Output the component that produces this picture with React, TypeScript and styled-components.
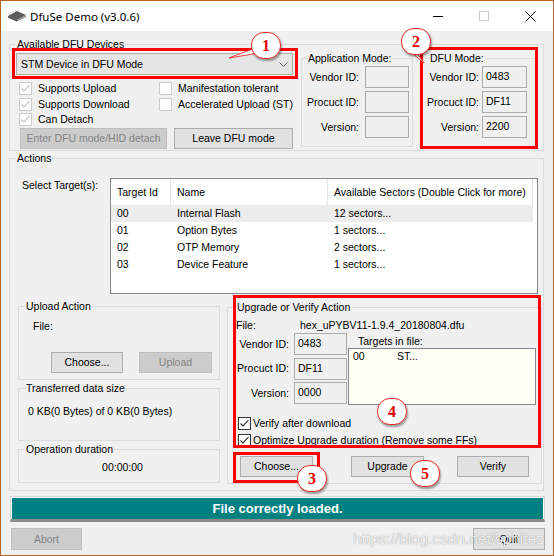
import React from "react";
import styled, { createGlobalStyle } from "styled-components";

const GlobalStyle = createGlobalStyle`
  html, body { margin: 0; padding: 0; background: #ffffff; }
  body {
    font-family: "Liberation Sans", Arial, sans-serif;
    font-size: 10.5px;
    line-height: 13px;
    color: #000;
  }
  * { box-sizing: border-box; }
`;

const Window = styled.div`
  position: relative;
  width: 554px;
  height: 556px;
  border: 1px solid #b8641e;
  background: #f0f0f0;
  display: flex;
  flex-direction: column;
  overflow: hidden;
`;

const TitleBar = styled.div`
  height: 30px;
  flex: none;
  background: #ffffff;
  display: flex;
  align-items: center;
`;

const TitleText = styled.span`
  margin-left: 3px;
  font-family: "Noto Sans", "Liberation Sans", sans-serif;
  font-size: 11.5px;
  color: #000;
`;

const TitleButtons = styled.div`
  margin-left: auto;
  display: flex;
  height: 100%;
`;

const TitleButton = styled.div`
  width: 46px;
  height: 30px;
  display: flex;
  align-items: center;
  justify-content: center;
`;

const Body = styled.div`
  flex: 1;
  display: flex;
  flex-direction: column;
  padding-left: 8px;
`;

const Group = styled.div<{ $w: number; $h: number; $mt?: number; $ml?: number }>`
  flex: none;
  width: ${(p) => p.$w}px;
  height: ${(p) => p.$h}px;
  margin-top: ${(p) => p.$mt ?? 0}px;
  margin-left: ${(p) => p.$ml ?? 0}px;
  border: 1px solid #dcdcdc;
  display: flex;
  flex-direction: column;
`;

const Caption = styled.div<{ $indent?: number }>`
  align-self: flex-start;
  margin: -7px 0 0 ${(p) => p.$indent ?? 6}px;
  padding: 0 1px;
  height: 13px;
  line-height: 13px;
  background: #f0f0f0;
  white-space: nowrap;
`;

/* ---------- devices section ---------- */

const DevicesBody = styled.div`
  display: flex;
  align-items: flex-start;
`;

const DeviceColumn = styled.div`
  width: 277px;
  margin: 2px 0 0 6px;
  display: flex;
  flex-direction: column;
`;

const Combo = styled.div`
  height: 22px;
  border: 1px solid #adadad;
  background: #e5e5e5;
  display: flex;
  align-items: center;
  padding: 0 4px 0 4px;
`;

const ComboText = styled.span`
  flex: 1;
`;

const CheckGrid = styled.div`
  display: grid;
  grid-template-columns: 140px 1fr;
  grid-auto-rows: 15.5px;
  margin: 6px 0 0 3px;
`;

const CheckRow = styled.div<{ $gap: number; $h?: number }>`
  display: flex;
  align-items: center;
  gap: ${(p) => p.$gap}px;
  white-space: nowrap;
  height: ${(p) => (p.$h ? `${p.$h}px` : "auto")};
`;

const Box = styled.span<{ $disabled?: boolean }>`
  flex: none;
  width: 13px;
  height: 13px;
  border: 1px solid ${(p) => (p.$disabled ? "#cccccc" : "#333333")};
  background: #ffffff;
  display: flex;
  align-items: center;
  justify-content: center;
`;

const ButtonRow = styled.div<{ $mt: number; $ml: number; $gap: number }>`
  display: flex;
  margin: ${(p) => p.$mt}px 0 0 ${(p) => p.$ml}px;
  gap: ${(p) => p.$gap}px;
`;

const Button = styled.button<{ $w: number; $h?: number; $off?: boolean; $ml?: number }>`
  flex: none;
  width: ${(p) => p.$w}px;
  height: ${(p) => p.$h ?? 21}px;
  margin-left: ${(p) => p.$ml ?? 0}px;
  padding: 0;
  font: inherit;
  border: 1px solid ${(p) => (p.$off ? "#bfbfbf" : "#adadad")};
  background: ${(p) => (p.$off ? "#cccccc" : "#e1e1e1")};
  color: ${(p) => (p.$off ? "#838383" : "#000000")};
  white-space: nowrap;
`;

const FieldGrid = styled.div<{ $label: number; $box: number; $gap: number; $rowGap: number; $mt: number; $ml?: number }>`
  display: grid;
  grid-template-columns: ${(p) => p.$label}px ${(p) => p.$box}px;
  grid-auto-rows: 22px;
  column-gap: ${(p) => p.$gap}px;
  row-gap: ${(p) => p.$rowGap}px;
  align-items: center;
  margin: ${(p) => p.$mt}px 0 0 ${(p) => p.$ml ?? 0}px;
  flex: none;
`;

const FieldLabel = styled.span`
  text-align: right;
  white-space: nowrap;
`;

const TextBox = styled.div`
  height: 22px;
  border: 1px solid #acacac;
  background: #f0f0f0;
  padding: 3px 0 0 3px;
  line-height: 13px;
`;

/* ---------- actions ---------- */

const TargetsRow = styled.div`
  display: flex;
  align-items: flex-start;
`;

const SideLabel = styled.span`
  width: 88px;
  margin: 13.5px 0 0 12px;
  white-space: nowrap;
  flex: none;
`;

const TargetList = styled.div`
  flex: none;
  width: 428px;
  height: 116px;
  margin-top: 13px;
  border: 1px solid #828790;
  background: #ffffff;
`;

const ListHeader = styled.div`
  display: grid;
  grid-template-columns: 60px 157px 205px;
  height: 26px;
`;

const HeaderCell = styled.div`
  border-right: 1px solid #e5e5e5;
  padding-left: 6px;
  display: flex;
  align-items: center;
  white-space: nowrap;
`;

const ListRow = styled.div<{ $selected?: boolean }>`
  display: grid;
  grid-template-columns: 60px 157px 205px;
  width: 422px;
  height: 17px;
  align-items: center;
  background: ${(p) => (p.$selected ? "#ececec" : "transparent")};
`;

const Cell = styled.span`
  padding-left: 6px;
  white-space: nowrap;
`;

const LowerRow = styled.div`
  display: flex;
  align-items: flex-start;
  margin-top: 12px;
`;

const SideColumn = styled.div`
  width: 202px;
  margin-left: 8px;
  display: flex;
  flex-direction: column;
  flex: none;
`;

const PlainText = styled.div<{ $mt: number; $ml?: number; $center?: boolean }>`
  margin: ${(p) => p.$mt}px 0 0 ${(p) => p.$ml ?? 0}px;
  white-space: nowrap;
  text-align: ${(p) => (p.$center ? "center" : "left")};
`;

const FileRow = styled.div`
  display: flex;
  margin: 4.5px 0 0 8px;
  white-space: nowrap;
`;

const FileKey = styled.span`
  width: 64px;
`;

const MiddleRow = styled.div`
  display: flex;
  align-items: flex-start;
  margin-top: 1.5px;
`;

const TargetsColumn = styled.div`
  display: flex;
  flex-direction: column;
  margin-left: 1px;
`;

const TargetsLabel = styled.span`
  margin: 1.5px 0 0 10px;
`;

const FileTargets = styled.div`
  width: 188px;
  height: 57px;
  margin-top: 0.5px;
  border: 1px solid #828790;
  background: #fffff8;
  padding: 1px 0 0 4px;
  display: flex;
`;

const TargetCell = styled.span<{ $w?: number }>`
  width: ${(p) => (p.$w ? `${p.$w}px` : "auto")};
`;

const CheckStack = styled.div`
  display: flex;
  flex-direction: column;
  margin: 9.5px 0 0 10px;
`;

/* ---------- status / bottom ---------- */

const StatusFrame = styled.div`
  flex: none;
  width: 535px;
  margin: 5px 0 0 1px;
  border: 1px solid #d6d6d6;
  border-bottom: 3px solid #8a8a8a;
  background: #ffffff;
  padding: 1px 1px 0 1px;
`;

const StatusText = styled.div`
  height: 21px;
  background: #008080;
  color: #ffffff;
  font-weight: bold;
  font-size: 13px;
  display: flex;
  align-items: center;
  justify-content: center;
`;

const BottomRow = styled.div`
  display: flex;
  margin: 6px 8px 0 2px;
`;

/* ---------- annotations ---------- */

const Highlight = styled.div<{ $x: number; $y: number; $w: number; $h: number }>`
  position: absolute;
  left: ${(p) => p.$x - 1}px;
  top: ${(p) => p.$y - 1}px;
  width: ${(p) => p.$w}px;
  height: ${(p) => p.$h}px;
  border: 3px solid #ff0000;
  pointer-events: none;
`;

const Badge = styled.div<{ $x: number; $y: number }>`
  position: absolute;
  left: ${(p) => p.$x - 1}px;
  top: ${(p) => p.$y - 1}px;
  width: 30px;
  height: 27px;
  border: 1.5px solid #f02828;
  border-radius: 13px;
  background: #ffffff;
  box-shadow: 1px 2px 2px rgba(0, 0, 0, 0.35);
  display: flex;
  align-items: center;
  justify-content: center;
  font-family: "Liberation Serif", serif;
  font-weight: bold;
  font-size: 16px;
  color: #e60000;
`;

const Pointers = styled.svg`
  position: absolute;
  left: 0;
  top: 0;
  pointer-events: none;
`;

const Watermark = styled.div`
  position: absolute;
  left: 352px;
  top: 529px;
  font-size: 15.4px;
  line-height: 18px;
  color: rgba(255, 255, 255, 0.85);
  text-shadow: 0 0 1px rgba(90, 90, 90, 0.7);
  white-space: nowrap;
  pointer-events: none;
`;

const CheckMark = ({ color }: { color: string }) => (
  <svg width="11" height="11" viewBox="0 0 11 11">
    <polyline points="1.5,5.5 4,8 9.5,2.2" fill="none" stroke={color} strokeWidth="1.2" />
  </svg>
);

function Check({
  label,
  checked,
  disabled,
  gap,
  h,
}: {
  label: string;
  checked?: boolean;
  disabled?: boolean;
  gap: number;
  h?: number;
}) {
  return (
    <CheckRow $gap={gap} $h={h}>
      <Box $disabled={disabled}>{checked && <CheckMark color={disabled ? "#c4c4c4" : "#333"} />}</Box>
      <span>{label}</span>
    </CheckRow>
  );
}

const ChipIcon = () => (
  <svg width="20" height="14" viewBox="0 0 20 14" style={{ marginLeft: 6, flex: "none" }}>
    <polygon points="1,7 10,2 19,6 10,11" fill="#5c5c5c" />
    <polygon points="1,7 10,11 10,12.5 1,8.5" fill="#3a3a3a" />
    <polygon points="10,11 19,6 19,7.5 10,12.5" fill="#8a8a8a" />
    {[0, 1, 2, 3].map((i) => (
      <line key={"a" + i} x1={3 + i * 2} y1={5.9 - i * 1.1} x2={2.2 + i * 2} y2={4.6 - i * 1.1} stroke="#9a9a9a" strokeWidth="0.9" />
    ))}
    {[0, 1, 2, 3].map((i) => (
      <line key={"b" + i} x1={11.5 + i * 2} y1={11 - i * 1.1} x2={12.3 + i * 2} y2={12.3 - i * 1.1} stroke="#9a9a9a" strokeWidth="0.9" />
    ))}
  </svg>
);

const targets = [
  { id: "00", name: "Internal Flash", sectors: "12 sectors..." },
  { id: "01", name: "Option Bytes", sectors: "1 sectors..." },
  { id: "02", name: "OTP Memory", sectors: "2 sectors..." },
  { id: "03", name: "Device Feature", sectors: "1 sectors..." },
];

export default function App() {
  return (
    <>
      <GlobalStyle />
      <Window>
        <TitleBar>
          <ChipIcon />
          <TitleText>DfuSe Demo (v3.0.6)</TitleText>
          <TitleButtons>
            <TitleButton>
              <svg width="10" height="10">
                <line x1="0" y1="5.5" x2="10" y2="5.5" stroke="#000" />
              </svg>
            </TitleButton>
            <TitleButton>
              <svg width="10" height="10">
                <rect x="0.5" y="0.5" width="9" height="9" fill="none" stroke="#cccccc" />
              </svg>
            </TitleButton>
            <TitleButton>
              <svg width="11" height="11">
                <path d="M0.5 0.5L10.5 10.5M10.5 0.5L0.5 10.5" stroke="#000" />
              </svg>
            </TitleButton>
          </TitleButtons>
        </TitleBar>

        <Body>
          <Group $w={535} $h={107} $mt={13}>
            <Caption>Available DFU Devices</Caption>
            <DevicesBody>
              <DeviceColumn>
                <Combo>
                  <ComboText>STM Device in DFU Mode</ComboText>
                  <svg width="9" height="5" viewBox="0 0 9 5">
                    <polyline points="0.5,0.5 4.5,4.5 8.5,0.5" fill="none" stroke="#606060" />
                  </svg>
                </Combo>
                <CheckGrid>
                  <Check label="Supports Upload" checked disabled gap={6} />
                  <Check label="Manifestation tolerant" disabled gap={6} />
                  <Check label="Supports Download" checked disabled gap={6} />
                  <Check label="Accelerated Upload (ST)" disabled gap={6} />
                  <Check label="Can Detach" checked disabled gap={6} />
                </CheckGrid>
                <ButtonRow $mt={0.5} $ml={4} $gap={7}>
                  <Button $w={147} $off>
                    Enter DFU mode/HID detach
                  </Button>
                  <Button $w={119}>Leave DFU mode</Button>
                </ButtonRow>
              </DeviceColumn>

              <Group $w={112} $h={89} $mt={7} $ml={8}>
                <Caption $indent={5}>Application Mode:</Caption>
                <FieldGrid $label={57} $box={44} $gap={6} $rowGap={3} $mt={1}>
                  <FieldLabel>Vendor ID:</FieldLabel>
                  <TextBox />
                  <FieldLabel>Procuct ID:</FieldLabel>
                  <TextBox />
                  <FieldLabel>Version:</FieldLabel>
                  <TextBox />
                </FieldGrid>
              </Group>

              <Group $w={116} $h={89} $mt={7} $ml={8}>
                <Caption $indent={7}>DFU Mode:</Caption>
                <FieldGrid $label={57} $box={45} $gap={3} $rowGap={3} $mt={1}>
                  <FieldLabel>Vendor ID:</FieldLabel>
                  <TextBox>0483</TextBox>
                  <FieldLabel>Procuct ID:</FieldLabel>
                  <TextBox>DF11</TextBox>
                  <FieldLabel>Version:</FieldLabel>
                  <TextBox>2200</TextBox>
                </FieldGrid>
              </Group>
            </DevicesBody>
          </Group>

          <Group $w={535} $h={333} $mt={7}>
            <Caption>Actions</Caption>
            <TargetsRow>
              <SideLabel>Select Target(s):</SideLabel>
              <TargetList>
                <ListHeader>
                  <HeaderCell>Target Id</HeaderCell>
                  <HeaderCell>Name</HeaderCell>
                  <HeaderCell>Available Sectors (Double Click for more)</HeaderCell>
                </ListHeader>
                {targets.map((t, i) => (
                  <ListRow key={t.id} $selected={i === 0}>
                    <Cell>{t.id}</Cell>
                    <Cell>{t.name}</Cell>
                    <Cell>{t.sectors}</Cell>
                  </ListRow>
                ))}
              </TargetList>
            </TargetsRow>

            <LowerRow>
              <SideColumn>
                <Group $w={202} $h={74}>
                  <Caption>Upload Action</Caption>
                  <PlainText $mt={6.5} $ml={14}>
                    File:
                  </PlainText>
                  <ButtonRow $mt={19.5} $ml={32} $gap={16}>
                    <Button $w={72}>Choose...</Button>
                    <Button $w={73} $off>
                      Upload
                    </Button>
                  </ButtonRow>
                </Group>
                <Group $w={202} $h={53} $mt={8}>
                  <Caption>Transferred data size</Caption>
                  <PlainText $mt={9.5} $ml={9}>
                    0 KB(0 Bytes) of 0 KB(0 Bytes)
                  </PlainText>
                </Group>
                <Group $w={202} $h={34} $mt={8}>
                  <Caption>Operation duration</Caption>
                  <PlainText $mt={4.5} $ml={7} $center>
                    00:00:00
                  </PlainText>
                </Group>
              </SideColumn>

              <Group $w={315} $h={177} $mt={1} $ml={7}>
                <Caption $indent={8}>Upgrade or Verify Action</Caption>
                <FileRow>
                  <FileKey>File:</FileKey>
                  <span>hex_uPYBV11-1.9.4_20180804.dfu</span>
                </FileRow>
                <MiddleRow>
                  <FieldGrid $label={61} $box={53} $gap={5} $rowGap={2.5} $mt={0}>
                    <FieldLabel>Vendor ID:</FieldLabel>
                    <TextBox>0483</TextBox>
                    <FieldLabel>Procuct ID:</FieldLabel>
                    <TextBox>DF11</TextBox>
                    <FieldLabel>Version:</FieldLabel>
                    <TextBox>0000</TextBox>
                  </FieldGrid>
                  <TargetsColumn>
                    <TargetsLabel>Targets in file:</TargetsLabel>
                    <FileTargets>
                      <TargetCell $w={44}>00</TargetCell>
                      <TargetCell>ST...</TargetCell>
                    </FileTargets>
                  </TargetsColumn>
                </MiddleRow>
                <CheckStack>
                  <Check label="Verify after download" checked gap={2} h={17} />
                  <Check label="Optimize Upgrade duration (Remove some FFs)" checked gap={2} h={17} />
                </CheckStack>
                <ButtonRow $mt={7.5} $ml={12} $gap={0}>
                  <Button $w={73}>Choose...</Button>
                  <Button $w={73} $ml={38}>
                    Upgrade
                  </Button>
                  <Button $w={72} $ml={33}>
                    Verify
                  </Button>
                </ButtonRow>
              </Group>
            </LowerRow>
          </Group>

          <StatusFrame>
            <StatusText>File correctly loaded.</StatusText>
          </StatusFrame>

          <BottomRow>
            <Button $w={71} $h={22} $off>
              Abort
            </Button>
            <Button $w={72} $h={22} $ml={391}>
              Quit
            </Button>
          </BottomRow>
        </Body>

        <Highlight $x={12} $y={48} $w={286} $h={31} />
        <Highlight $x={420} $y={47} $w={118} $h={102} />
        <Highlight $x={233} $y={295} $w={308} $h={153} />
        <Highlight $x={233} $y={452} $w={87} $h={31} />

        <Pointers width="552" height="554" viewBox="1 1 552 554">
          <polygon points="255,48 259,53 229,58" fill="#ffffff" stroke="#f02828" strokeWidth="0.9" />
          <polygon points="411,52 417,53 424,63" fill="#ffffff" stroke="#f02828" strokeWidth="0.9" />
        </Pointers>

        <Badge $x={251} $y={32}>1</Badge>
        <Badge $x={401} $y={28}>2</Badge>
        <Badge $x={297} $y={465}>3</Badge>
        <Badge $x={377} $y={398}>4</Badge>
        <Badge $x={410} $y={460}>5</Badge>

        <Watermark>https://blog.csdn.net/sphitez</Watermark>
      </Window>
    </>
  );
}
